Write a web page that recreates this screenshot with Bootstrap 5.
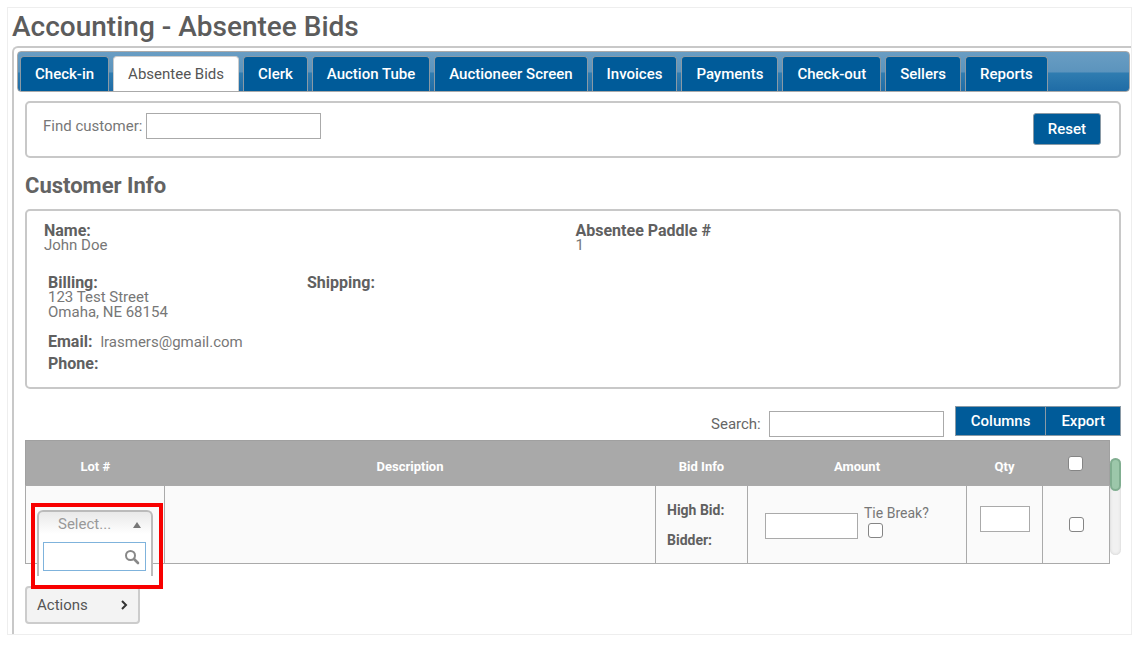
<!DOCTYPE html>
<html lang="en">
<head>
<meta charset="utf-8">
<meta name="viewport" content="width=device-width, initial-scale=1">
<title>Accounting - Absentee Bids</title>
<link href="https://cdn.jsdelivr.net/npm/bootstrap@5.3.0/dist/css/bootstrap.min.css" rel="stylesheet">
<style>
  body { font-family: Roboto, "Liberation Sans", sans-serif; font-size: 15px; line-height: 20px; color: #777; background: #fff; }
  .page-frame { margin: 7px; border: 1px solid #eee; padding: 0 0 0 4px; }
  h1 { font-size: 28px; line-height: 38px; font-weight: 500; color: #5c5c5c; }
  h2 { font-size: 22px; line-height: 28px; font-weight: 700; color: #636363; margin: 14px 0 9px; }
  .main-panel { border: solid #c8c8c8; border-width: 2px 0 0 2px; border-radius: 6px 0 0 0; padding: 3px 1px 10px 3px; }
  .tab-bar { gap: 4px; padding: 4px 4px 0 2px; border: 1px solid #aaa; border-radius: 4px; background: linear-gradient(#699dc3 0, #5c94bd 50%, #2f7cb0 55%, #1f6ca6 100%); }
  .tab-bar .nav-link { padding: 7px 14px; height: 35px; border: 1px solid #8a9aa6; border-bottom: 0; border-radius: 4px 4px 0 0; background: #005b99; color: #fff; font-weight: 500; line-height: 20px; white-space: nowrap; }
  .tab-bar .nav-link.active { background: #fff; color: #555; font-weight: 400; border-color: #ccc; }
  .panel-body { padding: 9px 9px 0 8px; }
  .info-box { border: 2px solid #c8c8c8; border-radius: 5px; background: #fff; }
  .find-box { padding: 10px 18px 11px 16px; gap: 12px; }
  .plain-input { height: 26px; border: 1px solid #aaa; border-radius: 0; background: #fff; padding: 2px 4px; color: #555; }
  .wide-input { width: 175px; }
  .amount-input { width: 93px; margin-top: 10px; }
  .qty-input { width: 50px; margin-bottom: 12px; }
  .blue-btn { background: #005b99; color: #fff; border: 1px solid #8a9aa6; font-size: 15px; font-weight: 500; line-height: 20px; padding: 5px 14px; border-radius: 3px; }
  .blue-btn:hover { background: #004d82; color: #fff; }
  .btn-group .blue-btn { border-radius: 0; padding: 4px 15px; }
  .customer-box { padding: 12px 12px 12px 17px; }
  .field-name { color: #606060; font-size: 16px; line-height: 15px; font-weight: 700; }
  .field-value { line-height: 15px; }
  .address-row { margin-top: 22px; }
  .address-col { width: 259px; }
  .contact-block { margin-top: 11px; }
  .contact-row { line-height: 22px; }
  .toolbar { margin-top: 17px; }
  .search-group { gap: 8px; margin: 5px 11px 0 0; }
  .search-label { color: #666; }
  .table-row-wrap { margin-top: 3px; }
  .bids-table { table-layout: fixed; border-collapse: collapse; width: 100%; }
  .bids-table th { height: 45px; background: #a9a9a9; color: #fff; font-size: 13px; font-weight: 700; text-align: center; vertical-align: middle; padding: 8px 0 0; }
  .bids-table th.check-cell { padding: 0; }
  .bids-table thead { border: 1px solid #a0a0a0; }
  .bids-table td { height: 78px; background: #fafafa; border: 1px solid #aaa; padding: 0; vertical-align: middle; font-size: 14px; }
  .col-lot { width: 139px; } .col-bid { width: 92px; } .col-amount { width: 219px; } .col-qty { width: 76px; } .col-check { width: 67px; }
  .tick-box { appearance: none; width: 15px; height: 15px; border: 1px solid #858585; border-radius: 3px; background: #fff; margin: 0; display: block; }
  .tick-box:checked { background: #005b99; }
  .bid-info { color: #606060; font-weight: 700; line-height: 30px; padding-left: 11px; }
  .amount-row { gap: 6px; padding: 0 0 8px 17px; }
  .scroll-track { width: 11px; height: 97px; margin-top: 18px; border-radius: 6px; background: #f1f1f1; box-shadow: inset 0 0 3px #ccc; }
  .scroll-thumb { height: 33px; border-radius: 6px; background: #9cc7aa; border: 2px solid #80ae90; }
  .lot-cell { position: relative; }
  .callout { position: absolute; left: 5px; top: 17px; width: 132px; height: 86px; border: 4px solid #f80000; z-index: 2; padding: 3px 2px; }
  .lot-menu { border: solid #bbb; border-width: 2px 2px 0; border-radius: 6px 6px 0 0; height: 66px; padding: 0 5px 0 4px; background: linear-gradient(#e9e9e9, #fff 22px); width: 116px; }
  .lot-toggle { border: 0; background: none; color: #999; padding: 2px 5px 0 15px; height: 30px; font-size: 15px; }
  .lot-search { border: 1px solid #7fb3dc; background: #fff; height: 29px; padding-right: 5px; }
  .lot-search input { border: 0; outline: 0; min-width: 0; padding: 0 4px; background: none; }
  .actions-btn { width: 115px; height: 38px; margin-top: 22px; border: 2px solid #ccc; border-radius: 4px; background: #f3f3f3; color: #555; padding: 0 10px; font-size: 15px; }
</style>
</head>
<body>
<div class="page-frame">
  <h1 class="mb-0">Accounting - Absentee Bids</h1>
  <main class="main-panel">
    <nav class="nav flex-nowrap tab-bar" aria-label="Accounting sections">
      <a class="nav-link" href="#">Check-in</a>
      <a class="nav-link active" href="#" aria-current="page">Absentee Bids</a>
      <a class="nav-link" href="#">Clerk</a>
      <a class="nav-link" href="#">Auction Tube</a>
      <a class="nav-link" href="#">Auctioneer Screen</a>
      <a class="nav-link" href="#">Invoices</a>
      <a class="nav-link" href="#">Payments</a>
      <a class="nav-link" href="#">Check-out</a>
      <a class="nav-link" href="#">Sellers</a>
      <a class="nav-link" href="#">Reports</a>
    </nav>
    <div class="panel-body">
      <div class="info-box find-box d-flex justify-content-between">
        <div class="d-flex align-items-center align-self-start">
          <label for="find" class="me-1">Find customer:</label>
          <input id="find" type="text" class="plain-input wide-input">
        </div>
        <button type="button" class="btn blue-btn">Reset</button>
      </div>

      <h2>Customer Info</h2>
      <section class="info-box customer-box">
        <div class="row g-0">
          <div class="col-6">
            <div class="field-name">Name:</div>
            <div class="field-value">John Doe</div>
          </div>
          <div class="col-6">
            <div class="field-name">Absentee Paddle #</div>
            <div class="field-value">1</div>
          </div>
        </div>
        <div class="address-row d-flex ms-1">
          <div class="address-col">
            <div class="field-name">Billing:</div>
            <div class="field-value">123 Test Street<br>Omaha, NE 68154</div>
          </div>
          <div class="field-name">Shipping:</div>
        </div>
        <div class="contact-block ms-1">
          <div class="contact-row d-flex gap-2"><span class="field-name contact-row">Email:</span><span>lrasmers@gmail.com</span></div>
          <div class="field-name contact-row">Phone:</div>
        </div>
      </section>

      <div class="toolbar d-flex justify-content-end align-items-start">
        <div class="search-group d-flex align-items-center">
          <label for="search" class="search-label">Search:</label>
          <input id="search" type="search" class="plain-input wide-input">
        </div>
        <div class="btn-group">
          <button type="button" class="btn blue-btn">Columns</button>
          <button type="button" class="btn blue-btn">Export</button>
        </div>
      </div>

      <div class="table-row-wrap d-flex align-items-start">
        <table class="bids-table">
          <colgroup><col class="col-lot"><col><col class="col-bid"><col class="col-amount"><col class="col-qty"><col class="col-check"></colgroup>
          <thead>
            <tr>
              <th scope="col">Lot #</th><th scope="col">Description</th><th scope="col">Bid Info</th><th scope="col">Amount</th><th scope="col">Qty</th>
              <th scope="col" class="check-cell"><input type="checkbox" class="tick-box mx-auto" aria-label="Select all"></th>
            </tr>
          </thead>
          <tbody>
            <tr>
              <td class="lot-cell">
                <div class="callout">
                  <div class="lot-menu">
                    <button type="button" class="lot-toggle w-100 d-flex align-items-start justify-content-between" aria-expanded="true">
                      <span>Select...</span>
                      <svg class="mt-2" width="8" height="6" viewBox="0 0 8 6" aria-hidden="true"><path d="M4 0L8 6H0z" fill="#777"/></svg>
                    </button>
                    <div class="lot-search d-flex align-items-center">
                      <input type="text" class="flex-fill w-100" aria-label="Search lots">
                      <svg width="16" height="16" viewBox="0 0 16 16" class="flex-shrink-0" fill="none" stroke="#888" stroke-linecap="round" aria-hidden="true"><circle cx="6.5" cy="6.5" r="4.5" stroke-width="2"/><path d="M10 10l4 4" stroke-width="2.6"/></svg>
                    </div>
                  </div>
                </div>
              </td>
              <td></td>
              <td><div class="bid-info">High Bid:<br>Bidder:</div></td>
              <td>
                <div class="amount-row d-flex align-items-start">
                  <input type="text" class="plain-input amount-input" aria-label="Amount">
                  <div>
                    <label for="tie" class="d-block">Tie Break?</label>
                    <input id="tie" type="checkbox" class="tick-box ms-1">
                  </div>
                </div>
              </td>
              <td><input type="text" class="plain-input qty-input d-block mx-auto" aria-label="Quantity"></td>
              <td><input type="checkbox" class="tick-box mx-auto" aria-label="Select row"></td>
            </tr>
          </tbody>
        </table>
        <div class="scroll-track flex-shrink-0"><div class="scroll-thumb"></div></div>
      </div>

      <button type="button" class="actions-btn d-flex align-items-center justify-content-between">
        <span>Actions</span>
        <svg width="7" height="10" viewBox="0 0 7 10" fill="none" stroke="#333" stroke-width="2" aria-hidden="true"><path d="M1 1l4 4-4 4"/></svg>
      </button>
    </div>
  </main>
</div>
<script src="https://cdn.jsdelivr.net/npm/bootstrap@5.3.0/dist/js/bootstrap.bundle.min.js"></script>
</body>
</html>
